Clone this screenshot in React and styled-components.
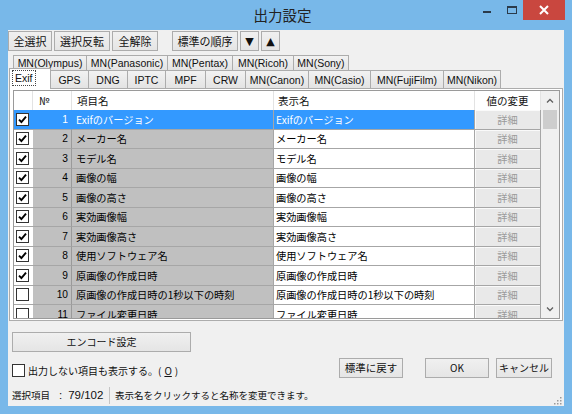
import React from 'react';
import styled, { createGlobalStyle } from 'styled-components';

const JP = '"Noto Sans CJK JP", "Liberation Sans", sans-serif';
const LATIN = '"Liberation Sans", "Noto Sans CJK JP", sans-serif';
const COLS = '19px 39px 202px 201px 66px';

const GlobalStyle = createGlobalStyle`
  html, body {
    margin: 0;
    padding: 0;
  }
  body {
    width: 572px;
    height: 414px;
    overflow: hidden;
    font-family: ${JP};
  }
`;

const Frame = styled.div`
  width: 572px;
  height: 414px;
  box-sizing: border-box;
  background: #78b8e9;
  display: flex;
  flex-direction: column;
  padding: 0 8px 8px;
`;

const TitleBar = styled.div`
  height: 30px;
  flex: none;
  margin: 0 -8px;
  padding-right: 7px;
  display: grid;
  grid-template-columns: 1fr auto 1fr;
  align-items: start;
`;

const Title = styled.div`
  font-family: ${JP};
  font-size: 14.5px;
  line-height: 30px;
  color: #222;
`;

const Captions = styled.div`
  justify-self: end;
  display: flex;
`;

const CaptionButton = styled.div`
  width: ${({ $w }) => $w}px;
  height: 20px;
  display: flex;
  align-items: center;
  justify-content: center;
  background: ${({ $close }) => ($close ? '#c9473f' : 'transparent')};
`;

const Client = styled.div`
  flex: 1;
  background: #f0f0f0;
  display: flex;
  flex-direction: column;
  min-height: 0;
`;

const Toolbar = styled.div`
  display: flex;
  gap: 2px;
  margin-top: 1px;
  height: 20px;
`;

const ToolGroup = styled.div`
  display: flex;
  gap: 2px;
  margin-left: ${({ $gap }) => $gap || 0}px;
`;

const Button = styled.button`
  width: ${({ $w }) => $w}px;
  height: ${({ $h }) => $h || 20}px;
  box-sizing: border-box;
  margin: 0 0 0 ${({ $ml }) => $ml || 0}px;
  padding: 0;
  border: 1px solid #acacac;
  background: linear-gradient(#f0f0f0, #e5e5e5);
  font-family: ${JP};
  font-size: ${({ $fs }) => $fs || 11}px;
  color: #111;
  display: flex;
  align-items: center;
  justify-content: center;
  line-height: 1;
`;

const Arrow = styled.span`
  font-family: "DejaVu Sans", sans-serif;
  font-size: 11px;
`;

const Tabs = styled.div`
  margin-top: 4px;
  display: flex;
  flex-direction: column;
`;

const TabRow = styled.div`
  display: flex;
  height: ${({ $h }) => $h}px;
  padding-left: ${({ $indent }) => $indent}px;
  align-items: flex-end;
`;

const Tab = styled.div`
  width: ${({ $w }) => $w}px;
  height: 100%;
  box-sizing: border-box;
  border: 1px solid #acacac;
  border-bottom: none;
  margin-right: -1px;
  background: linear-gradient(#f2f2f2, #e3e3e3);
  font-family: ${LATIN};
  font-size: 10.5px;
  color: #111;
  display: flex;
  align-items: center;
  justify-content: center;
  white-space: nowrap;
`;

const ActiveTab = styled(Tab)`
  position: relative;
  z-index: 1;
  height: calc(100% + 3px);
  margin: 0 -1px -1px -2px;
  width: ${({ $w }) => $w + 4}px;
  background: #fff;
  align-items: flex-start;
  padding-top: 2px;
  justify-content: flex-start;
  padding-left: 3px;
`;

const Focus = styled.span`
  outline: 1px dotted #444;
  padding: 0 2px;
  line-height: 14px;
`;

const Panel = styled.div`
  height: 233px;
  box-sizing: border-box;
  margin: 0 1px;
  border: 1px solid #acacac;
  background: #fff;
  padding: 1px 2px 1px 3px;
  display: flex;
`;

const List = styled.div`
  flex: 1;
  border: 1px solid #9a9a9a;
  display: flex;
  overflow: hidden;
  background: #fff;
`;

const Table = styled.div`
  width: 527px;
  display: flex;
  flex-direction: column;
  overflow: hidden;
`;

const Header = styled.div`
  display: grid;
  grid-template-columns: ${COLS};
  height: 19px;
  flex: none;
`;

const HeadCell = styled.div`
  border-right: 1px solid #e3e3e3;
  font-size: 10.5px;
  color: #111;
  display: flex;
  align-items: center;
  justify-content: ${({ $center }) => ($center ? 'center' : 'flex-start')};
  padding-left: ${({ $pad }) => $pad || 0}px;
  white-space: nowrap;
`;

const Row = styled.div`
  display: grid;
  grid-template-columns: ${COLS};
  height: 19.5px;
  flex: none;
`;

const Cell = styled.div`
  box-sizing: border-box;
  border-bottom: 1px solid #a6a6a6;
  border-right: 1px solid #a6a6a6;
  display: flex;
  align-items: center;
  font-size: 10.2px;
  white-space: nowrap;
  overflow: hidden;
  background: ${({ $sel }) => ($sel ? '#3399ff' : '#fff')};
  color: ${({ $sel }) => ($sel ? '#fff' : '#000')};
`;

const CheckCell = styled(Cell)`
  border-right: none;
  padding-left: 2px;
`;

const NoCell = styled(Cell)`
  justify-content: flex-end;
  padding-right: 3px;
  font-family: ${LATIN};
  background: ${({ $sel }) => ($sel ? '#3399ff' : '#c0c0c0')};
  border-right-color: ${({ $sel }) => ($sel ? '#3399ff' : '#9a9a9a')};
`;

const NameCell = styled(Cell)`
  padding-left: 4px;
  background: ${({ $sel }) => ($sel ? '#3399ff' : '#c0c0c0')};
`;

const DisplayCell = styled(Cell)`
  padding-left: 2px;
`;

const DetailCell = styled(Cell)`
  justify-content: center;
  background: #e9e9e9;
  color: #9a9a9a;
  box-shadow: inset 1px 1px 0 #fafafa;
`;

const Box = styled.span`
  width: 13px;
  height: 13px;
  box-sizing: border-box;
  border: 1px solid #333;
  background: #fff;
  display: inline-flex;
  align-items: center;
  justify-content: center;
  flex: none;
`;

const Scrollbar = styled.div`
  width: 18px;
  background: #f0f0f0;
  display: flex;
  flex-direction: column;
`;

const ScrollArrow = styled.div`
  height: 18px;
  display: flex;
  align-items: center;
  justify-content: center;
  flex: none;
`;

const Track = styled.div`
  flex: 1;
  padding: 1px 2px;
`;

const Thumb = styled.div`
  height: 19px;
  background: #cdcdcd;
`;

const Encode = styled(Button)`
  margin: 11px 0 0 4px;
`;

const BottomRow = styled.div`
  display: flex;
  align-items: center;
  margin-top: 6px;
  height: 20px;
`;

const CheckLabel = styled.label`
  display: flex;
  align-items: center;
  gap: 3px;
  margin: 4px 0 0 4px;
  font-size: 10px;
  color: #111;
`;

const Actions = styled.div`
  margin-left: auto;
  margin-right: 12px;
  display: flex;
`;

const StatusBar = styled.div`
  margin-top: auto;
  height: 22px;
  display: flex;
  align-items: center;
  font-size: 9.5px;
  color: #111;
  position: relative;
`;

const StatusPane = styled.div`
  box-sizing: border-box;
  width: ${({ $w }) => ($w ? `${$w}px` : 'auto')};
  padding: 0 0 0 ${({ $pl }) => $pl || 4}px;
  white-space: nowrap;
  border-right: ${({ $sep }) => ($sep ? '1px solid #c4c4c4' : 'none')};
  line-height: 17px;
`;

const Count = styled.span`
  font-family: ${LATIN};
  font-size: 11.5px;
  margin-left: ${({ $ml }) => $ml || 0}px;
`;

const Grip = styled.svg`
  position: absolute;
  right: 2px;
  bottom: 1px;
`;

const rows = [
  { no: 1, name: 'Exifのバージョン', checked: true, selected: true },
  { no: 2, name: 'メーカー名', checked: true },
  { no: 3, name: 'モデル名', checked: true },
  { no: 4, name: '画像の幅', checked: true },
  { no: 5, name: '画像の高さ', checked: true },
  { no: 6, name: '実効画像幅', checked: true },
  { no: 7, name: '実効画像高さ', checked: true },
  { no: 8, name: '使用ソフトウェア名', checked: true },
  { no: 9, name: '原画像の作成日時', checked: true },
  { no: 10, name: '原画像の作成日時の1秒以下の時刻', checked: false },
  { no: 11, name: 'ファイル変更日時', checked: false },
];

const backTabs = [
  ['MN(Olympus)', 74], ['MN(Panasonic)', 82], ['MN(Pentax)', 66], ['MN(Ricoh)', 62], ['MN(Sony)', 56],
];

const frontTabs = [
  ['GPS', 39], ['DNG', 40], ['IPTC', 39], ['MPF', 41], ['CRW', 41],
  ['MN(Canon)', 64], ['MN(Casio)', 63], ['MN(FujiFilm)', 74], ['MN(Nikon)', 58],
];

const Check = ({ checked }) => (
  <Box>
    {checked && (
      <svg width="9" height="9" viewBox="0 0 9 9">
        <path d="M1 4.6 L3.4 7 L8 1.6" fill="none" stroke="#000" strokeWidth="1.9" />
      </svg>
    )}
  </Box>
);

const Chevron = ({ up }) => (
  <svg width="8" height="5" viewBox="0 0 8 5">
    <path d={up ? 'M1 4.5 L4 1.5 L7 4.5' : 'M1 0.5 L4 3.5 L7 0.5'} fill="none" stroke="#606060" strokeWidth="1.3" />
  </svg>
);

const App = () => (
  <>
    <GlobalStyle />
    <Frame>
      <TitleBar>
        <span />
        <Title>出力設定</Title>
        <Captions>
          <CaptionButton $w={27}>
            <svg width="8" height="8" viewBox="0 0 8 8"><rect x="0" y="5" width="8" height="2" fill="#2a3a4a" /></svg>
          </CaptionButton>
          <CaptionButton $w={23}>
            <svg width="10" height="8" viewBox="0 0 10 8"><rect x="0.5" y="0.5" width="9" height="7" fill="none" stroke="#2a3a4a" /><rect x="0" y="0" width="10" height="2" fill="#2a3a4a" /></svg>
          </CaptionButton>
          <CaptionButton $w={42} $close>
            <svg width="10" height="10" viewBox="0 0 10 10"><path d="M1 1 L9 9 M9 1 L1 9" stroke="#fff" strokeWidth="2" /></svg>
          </CaptionButton>
        </Captions>
      </TitleBar>
      <Client>
        <Toolbar>
          <ToolGroup>
            <Button $w={44}>全選択</Button>
            <Button $w={56}>選択反転</Button>
            <Button $w={46}>全解除</Button>
          </ToolGroup>
          <ToolGroup $gap={12}>
            <Button $w={66}>標準の順序</Button>
            <Button $w={19}><Arrow>▼</Arrow></Button>
            <Button $w={19}><Arrow>▲</Arrow></Button>
          </ToolGroup>
        </Toolbar>
        <Tabs>
          <TabRow $h={15} $indent={5}>
            {backTabs.map(([label, w]) => <Tab key={label} $w={w}>{label}</Tab>)}
          </TabRow>
          <TabRow $h={18} $indent={3}>
            <ActiveTab $w={38}><Focus>Exif</Focus></ActiveTab>
            {frontTabs.map(([label, w]) => <Tab key={label} $w={w}>{label}</Tab>)}
          </TabRow>
        </Tabs>
        <Panel>
          <List>
            <Table>
              <Header>
                <HeadCell />
                <HeadCell $pad={6}>№</HeadCell>
                <HeadCell $pad={5}>項目名</HeadCell>
                <HeadCell $pad={4}>表示名</HeadCell>
                <HeadCell $center>値の変更</HeadCell>
              </Header>
              {rows.map(({ no, name, checked, selected }) => (
                <Row key={no}>
                  <CheckCell $sel={selected}><Check checked={checked} /></CheckCell>
                  <NoCell $sel={selected}>{no}</NoCell>
                  <NameCell $sel={selected}>{name}</NameCell>
                  <DisplayCell $sel={selected}>{name}</DisplayCell>
                  <DetailCell>詳細</DetailCell>
                </Row>
              ))}
            </Table>
            <Scrollbar>
              <ScrollArrow><Chevron up /></ScrollArrow>
              <Track><Thumb /></Track>
              <ScrollArrow><Chevron /></ScrollArrow>
            </Scrollbar>
          </List>
        </Panel>
        <Encode $w={179} $fs={10}>エンコード設定</Encode>
        <BottomRow>
          <CheckLabel><Check checked={false} />出力しない項目も表示する。(<u>O</u>)</CheckLabel>
          <Actions>
            <Button $w={64} $fs={10.5}>標準に戻す</Button>
            <Button $w={64} $fs={10} $ml={22}>OK</Button>
            <Button $w={56} $fs={10} $ml={7}>キャンセル</Button>
          </Actions>
        </BottomRow>
        <StatusBar>
          <StatusPane $sep $w={102}>選択項目<Count $ml={9}>:</Count><Count $ml={6}>79/102</Count></StatusPane>
          <StatusPane $pl={5}>表示名をクリックすると名称を変更できます。</StatusPane>
          <Grip width="10" height="10" viewBox="0 0 10 10">
            {[[8, 2], [8, 5], [5, 5], [8, 8], [5, 8], [2, 8]].map(([x, y]) => (
              <rect key={`${x}-${y}`} x={x} y={y} width="1.5" height="1.5" fill="#9a9a9a" />
            ))}
          </Grip>
        </StatusBar>
      </Client>
    </Frame>
  </>
);

export default App;
